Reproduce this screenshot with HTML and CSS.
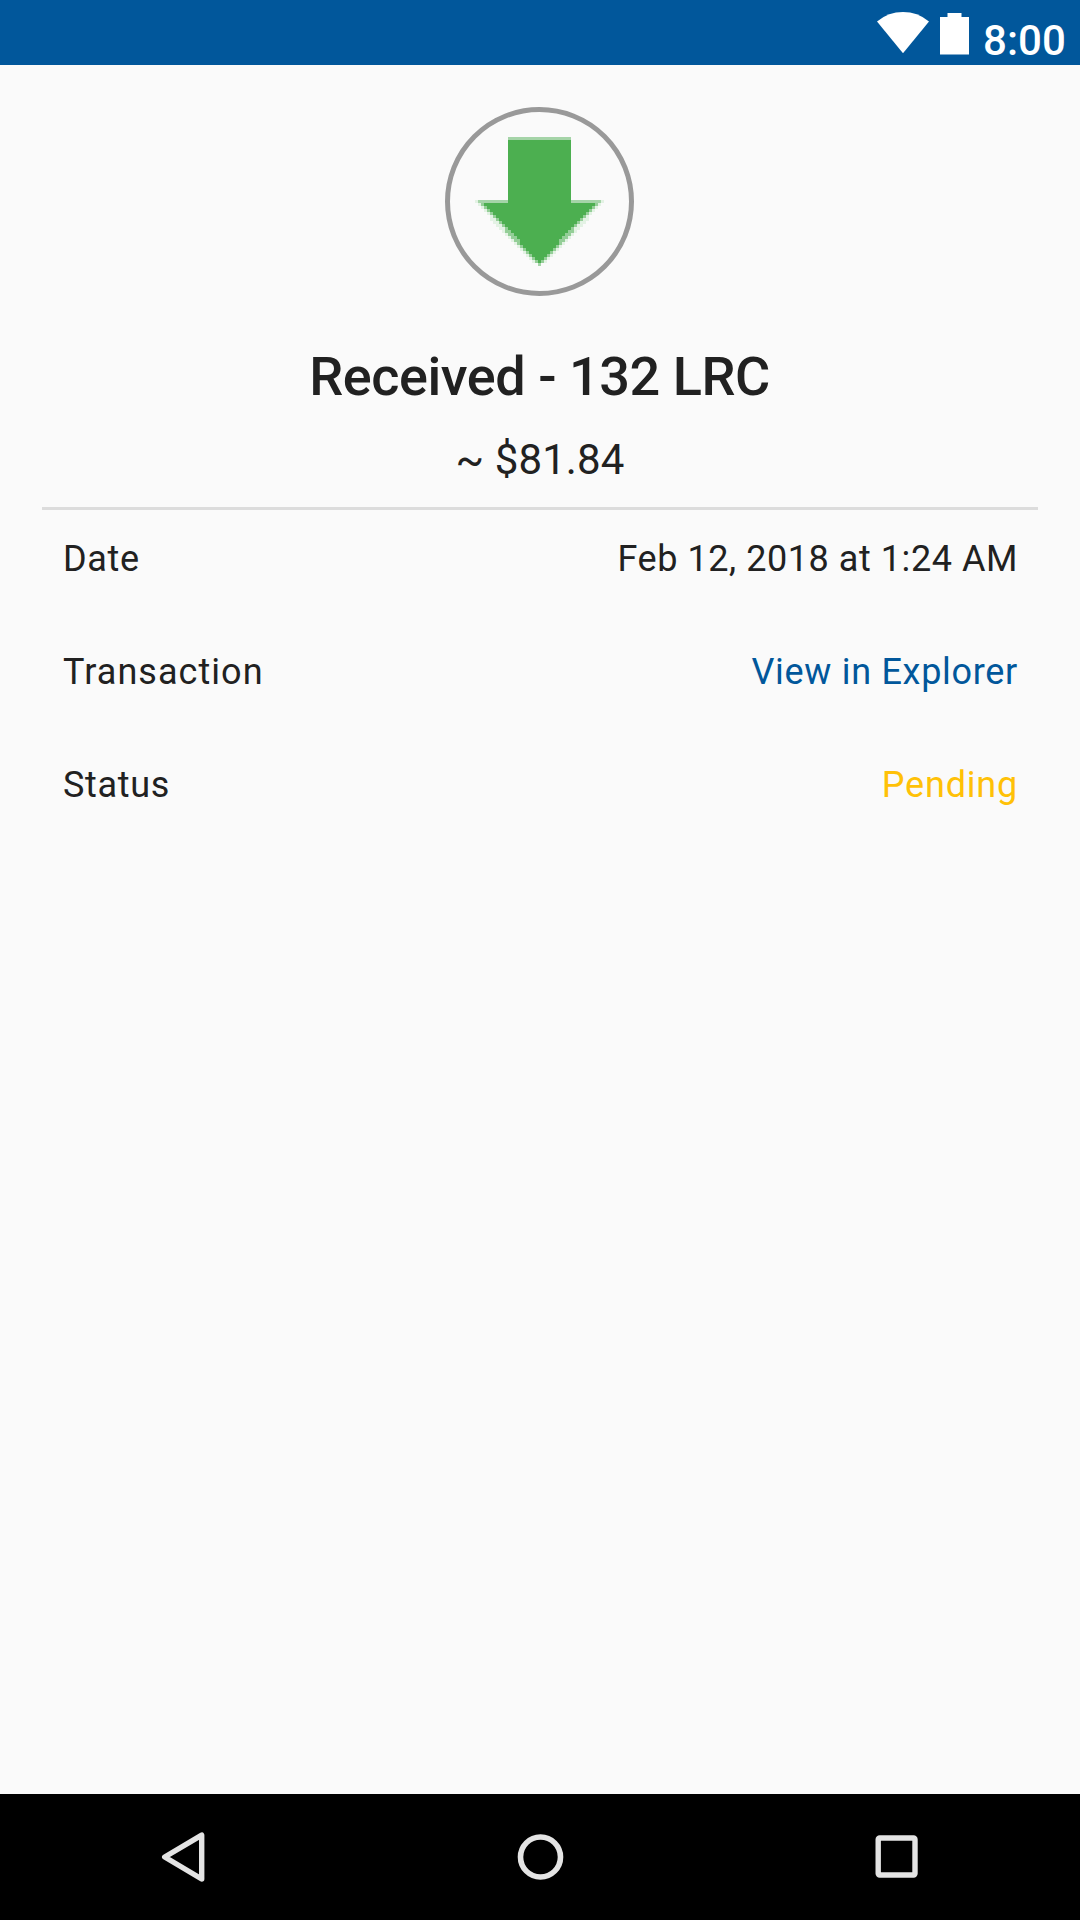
FILE: index.html
```html
<!DOCTYPE html>
<html lang="en">
<head>
<meta charset="utf-8">
<title>Transaction details</title>
<link rel="stylesheet" href="styles.css">
</head>
<body>
<div class="screen">
  <header class="status-bar">
    <svg class="wifi" width="52" height="42" viewBox="0 0 52 42"><path fill="#fff" d="M26 41.2 0 9.4Q11.500 0 26 0T52 9.400Z"/></svg>
    <svg class="battery" width="29" height="42" viewBox="0 0 29 42"><path fill="#fff" d="M7.500 0h14v4H29v37.500H0V4h7.500z"/></svg>
    <span class="clock">8:00</span>
  </header>
  <main class="details">
    <div class="badge">
      <svg width="129" height="129" viewBox="0 0 43 43" shape-rendering="crispEdges">
        <defs>
          <path id="head" d="M3 22v1h1v1h1v1h1v1h1v1h1v1h1v1h1v1h1v1h1v1h1v1h1v1h1v2h1v1h1v1h1v1h1v1h1v1h1v1h1v-1h1v-1h1v-1h1v-1h1v-1h1v-1h1v-2h1v-1h1v-1h1v-1h1v-1h1v-1h1v-1h1v-1h1v-1h1v-1h1v-1h1v-1h1v-1z"/>
          <path id="mid" d="M3 22v1h1v1h1v1h1v1h1v1h1v1h1v1h1v1h1v2h1v1h1v1h1v1h1v1h1v1h1v1h1v1h1v1h1v1h1v1h1v-1h1v-1h1v-1h1v-1h1v-1h1v-1h1v-1h1v-1h1v-1h1v-1h1v-2h1v-1h1v-1h1v-1h1v-1h1v-1h1v-1h1v-1h1v-1z"/>
          <path id="soft" d="M3 22v1h1v1h1v1h1v1h1v2h1v1h1v1h1v1h1v1h1v1h1v1h1v1h1v1h1v1h1v1h1v1h1v1h1v1h1v1h1v-1h1v-1h1v-1h1v-1h1v-1h1v-1h1v-1h1v-1h1v-1h1v-1h1v-1h1v-1h1v-1h1v-1h1v-2h1v-1h1v-1h1v-1h1v-1z"/>
        </defs>
        <g fill="#e3f2e4"><use href="#soft" x="-2"/><use href="#soft" x="2"/><path d="M0 21h11v1H0zM32 21h11v1H32z"/></g>
        <g fill="#94ce97"><use href="#mid" x="-1"/><use href="#mid" x="1"/></g>
        <path fill="#a5d4a8" d="M11 0h21v1H11zM1 21h41v1H1zM21 42h1v1h-1z"/>
        <g fill="#4caf50"><use href="#head"/><path d="M11 1h21v21H11z"/></g>
      </svg>
    </div>
    <h1 class="title">Received - 132 LRC</h1>
    <p class="amount">~ $81.84</p>
    <dl class="rows">
      <div class="row"><dt>Date</dt><dd class="date">Feb 12, 2018 at 1:24 AM</dd></div>
      <div class="row"><dt class="transaction">Transaction</dt><dd class="link">View in Explorer</dd></div>
      <div class="row"><dt>Status</dt><dd class="pending">Pending</dd></div>
    </dl>
  </main>
  <nav class="nav-bar">
    <svg width="100" height="126" viewBox="0 0 100 126"><path fill="none" stroke="#e4e4e4" stroke-width="5.400" stroke-linejoin="round" d="M24.700 63 61.700 41.200V85z"/></svg>
    <svg width="100" height="126" viewBox="0 0 100 126"><circle cx="50.500" cy="63" r="20" fill="none" stroke="#e4e4e4" stroke-width="5.600"/></svg>
    <svg width="100" height="126" viewBox="0 0 100 126"><rect x="28.200" y="44" width="36.800" height="37" rx="1.500" fill="none" stroke="#e4e4e4" stroke-width="5.400"/></svg>
  </nav>
</div>
</body>
</html>
```
FILE: styles.css
```css
body {
  margin: 0;
  font-family: Roboto, sans-serif;
  color: #212121;
}

.screen {
  display: flex;
  flex-direction: column;
  width: 1080px;
  height: 1920px;
  background: #fafafa;
}

.status-bar {
  box-sizing: border-box;
  display: flex;
  justify-content: flex-end;
  height: 65px;
  padding: 12px 14px 0 0;
  background: #01579b;
  color: #fff;
}

.battery {
  margin: 1px 14px 0 11px;
}

.clock {
  font-size: 42px;
  font-weight: 500;
  line-height: 58px;
  letter-spacing: 0.1px;
}

.details {
  flex: 1;
  display: flex;
  flex-direction: column;
  align-items: center;
  padding: 42px 42px 0;
}

.badge {
  box-sizing: border-box;
  display: flex;
  align-items: center;
  justify-content: center;
  width: 189px;
  height: 189px;
  margin-right: 1px;
  border: 5px solid #999;
  border-radius: 50%;
}

.title {
  margin: 45px 1px 0 0;
  font-size: 54px;
  font-weight: 500;
  line-height: 72px;
  letter-spacing: -0.45px;
}

.amount {
  margin: 19px 0 0;
  font-size: 42px;
  line-height: 56px;
  letter-spacing: 0.1px;
}

.rows {
  width: 100%;
  margin: 19px 0 0;
  border-top: 3px solid #dcdcdc;
}

.row {
  display: flex;
  justify-content: space-between;
  height: 113px;
  padding: 0 20px 0 21px;
  font-size: 36px;
  line-height: 99px;
  letter-spacing: 0.7px;
}

.row dt,
.row dd {
  margin: 0;
}

.row .date {
  letter-spacing: 0.56px;
}

.row .transaction {
  letter-spacing: 1.05px;
}

.row .link {
  color: #01579b;
  letter-spacing: 0.7px;
}

.row .pending {
  color: #ffc107;
  letter-spacing: 0.8px;
}

.nav-bar {
  display: flex;
  gap: 250px;
  height: 126px;
  padding-left: 140px;
  background: #000;
}

.nav-bar svg:last-child {
  margin-left: 10px;
}
```
